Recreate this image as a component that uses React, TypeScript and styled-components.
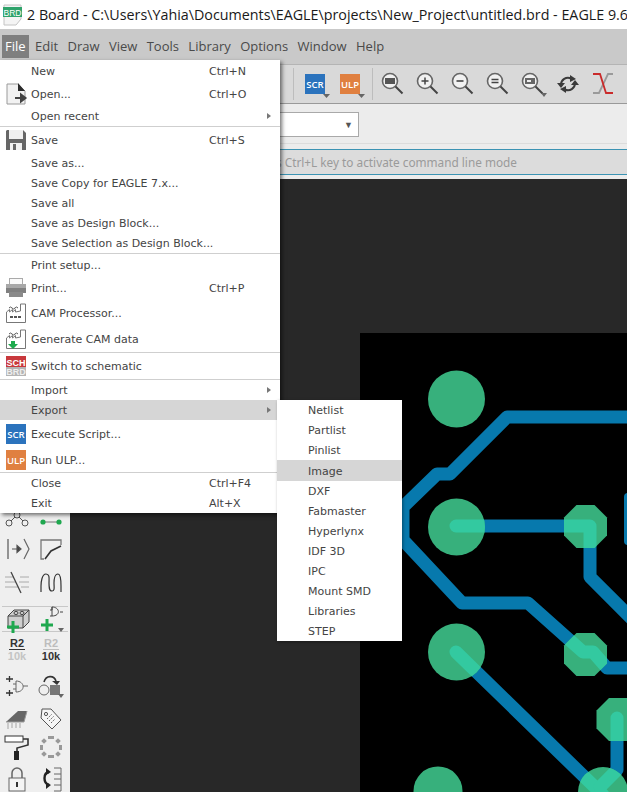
import type { ReactNode } from "react";
import { createGlobalStyle, styled } from "styled-components";

const GlobalStyle = createGlobalStyle`
  html, body { margin: 0; padding: 0; background: #fff; }
  #root { width: 627px; height: 792px; overflow: hidden; }
`;

const UI = `"Open Sans", "Noto Sans", sans-serif`;
const MENU = `"DejaVu Sans", "Noto Sans", sans-serif`;

const Page = styled.div`
  position: relative;
  width: 627px;
  height: 792px;
  overflow: hidden;
  display: flex;
  flex-direction: column;
  font-family: ${UI};
`;

const TitleBar = styled.div`
  height: 29px;
  display: flex;
  align-items: center;
  gap: 5px;
  padding-left: 3px;
  background: #fff;
  color: #1a1a1a;
  font-size: 14.3px;
  white-space: nowrap;
  flex: none;
`;

const TitleIcon = styled.svg`
  flex: none;
  display: block;
`;

const MenuBar = styled.div`
  height: 35px;
  display: flex;
  align-items: center;
  padding-left: 2px;
  gap: 3.4px;
  background: #c9c9c9;
  flex: none;
`;

const MenuBarItem = styled.div<{ $active?: boolean }>`
  height: 23px;
  line-height: 23px;
  padding: 0 3px;
  font-size: 13px;
  color: ${(p) => (p.$active ? "#fff" : "#4a4a4a")};
  background: ${(p) => (p.$active ? "#7f7f7f" : "transparent")};
`;

const Toolbar = styled.div`
  height: 38px;
  display: flex;
  align-items: center;
  padding-left: 293px;
  background: #d9d9d9;
  border-top: 1px solid #b4b4b4;
  border-bottom: 1px solid #999;
  flex: none;
`;

const ToolbarSep = styled.div<{ $gap?: number }>`
  width: 1px;
  height: 32px;
  background: #bdbdbd;
  margin-left: ${(p) => p.$gap ?? 0}px;
  margin-right: 2px;
  flex: none;
`;

const ToolbarItem = styled.div<{ $first?: boolean; $start?: boolean }>`
  width: 35px;
  height: 30px;
  display: flex;
  align-items: center;
  justify-content: ${(p) => (p.$start ? "flex-start" : "center")};
  margin-left: ${(p) => (p.$first ? 9 : 0)}px;
  flex: none;
`;

const OptionBar = styled.div`
  height: 40px;
  display: flex;
  align-items: flex-start;
  padding-top: 8px;
  box-sizing: border-box;
  background: #ececec;
  border-bottom: 1px solid #dcdcdc;
  flex: none;
`;

const LayerSelect = styled.div`
  width: 208px;
  height: 25px;
  margin-left: 151px;
  box-sizing: border-box;
  background: #fff;
  border: 1px solid #a9a9a9;
  display: flex;
  align-items: center;
  justify-content: flex-end;
  padding-right: 5px;
  color: #555;
  font-size: 9px;
`;

const CommandWrap = styled.div`
  height: 35px;
  padding: 5px 0;
  box-sizing: border-box;
  background: #ececec;
  flex: none;
`;

const CommandLine = styled.div`
  height: 26px;
  box-sizing: border-box;
  background: #dcdcdc;
  border-top: 1px solid #3b93b3;
  border-bottom: 1px solid #3b93b3;
  font-family: "Noto Sans", sans-serif;
  font-size: 11.8px;
  line-height: 24px;
  color: #9a9a9a;
  width: 100%;
  white-space: nowrap;
`;

const CommandText = styled.div`
  width: 517px;
  text-align: right;
`;

const Workspace = styled.div`
  flex: 1;
  display: flex;
  min-height: 0;
`;

const ToolColumn = styled.div`
  width: 70px;
  padding-top: 322px;
  box-sizing: border-box;
  background: #efefef;
  flex: none;
`;

const ToolRow = styled.div<{ $h: number }>`
  height: ${(p) => p.$h}px;
  display: grid;
  grid-template-columns: 34px 34px;
  align-items: center;
  justify-items: center;
`;

const ToolSep = styled.div<{ $top: number }>`
  height: 1px;
  background: #c8c8c8;
  margin: ${(p) => p.$top}px 2px 0;
`;

const ToolSvg = styled.svg`
  display: block;
  overflow: visible;
`;

const ValueStack = styled.div`
  width: 26px;
  display: flex;
  flex-direction: column;
  align-items: center;
  font-family: "Liberation Sans", sans-serif;
  font-weight: 700;
  font-size: 11px;
  line-height: 12px;
`;

const ValueName = styled.span<{ $dim?: boolean }>`
  color: ${(p) => (p.$dim ? "#bdbdbd" : "#333")};
  width: 16px;
  text-align: center;
  border-bottom: 1px solid ${(p) => (p.$dim ? "#bdbdbd" : "#333")};
`;

const ValueAmount = styled.span<{ $dim?: boolean }>`
  color: ${(p) => (p.$dim ? "#c4c4c4" : "#333")};
`;

const Canvas = styled.div`
  flex: 1;
  min-width: 0;
  background: #282828;
  padding: 154px 0 0 290px;
  box-sizing: border-box;
`;

const Board = styled.svg`
  display: block;
  width: 267px;
  height: 459px;
  background: #000;
`;

const FileMenu = styled.div`
  position: absolute;
  left: 0;
  top: 60px;
  width: 280px;
  background: #fff;
  box-shadow: 2px 2px 4px rgba(0, 0, 0, 0.55);
  font-family: ${MENU};
  font-size: 11px;
  color: #444;
`;

const Row = styled.div<{ $h: number; $active?: boolean }>`
  height: ${(p) => p.$h}px;
  box-sizing: border-box;
  display: grid;
  grid-template-columns: 31px 178px 58px 13px;
  align-items: center;
  white-space: nowrap;
  background: ${(p) => (p.$active ? "#d6d6d6" : "transparent")};
`;

const RowLabel = styled.span`
  padding-top: 1px;
`;

const RowIcon = styled.div`
  padding-left: 6px;
  display: flex;
  align-items: center;
`;

const Arrow = styled.div`
  width: 0;
  height: 0;
  border-left: 4px solid #777;
  border-top: 3px solid transparent;
  border-bottom: 3px solid transparent;
`;

const MenuSep = styled.div`
  height: 1px;
  background: #cfcfcf;
`;

const SubMenu = styled.div`
  position: absolute;
  left: 277px;
  top: 400px;
  width: 125px;
  background: #fff;
  box-shadow: 1px 1px 3px rgba(0, 0, 0, 0.4);
  font-family: ${MENU};
  font-size: 11px;
  color: #444;
`;

const SubRow = styled.div<{ $active?: boolean }>`
  height: ${(p) => (p.$active ? 21 : 20)}px;
  line-height: ${(p) => (p.$active ? 23 : 22)}px;
  padding-left: 31px;
  background: ${(p) => (p.$active ? "#d6d6d6" : "transparent")};
`;

function BrdDoc() {
  return (
    <TitleIcon width="19" height="22" viewBox="0 0 19 22">
      <path d="M1 1h17v14l-5 6H1z" fill="#f4f4f4" stroke="#c4c4c4" />
      <rect x="0" y="3" width="19" height="10" fill="#2fa36b" />
      <text x="9.5" y="11.5" textAnchor="middle" fontSize="8.5" fontFamily="Liberation Sans" fill="#fff">BRD</text>
    </TitleIcon>
  );
}

function OpenIcon() {
  return (
    <ToolSvg width="22" height="22" viewBox="0 0 22 22">
      <path d="M1 1h11l7 7v13H1z" fill="#f2f2f2" stroke="#9a9a9a" />
      <path d="M12 0l7 8h-7z" fill="#2c2c2c" />
      <path d="M9 15h9M15 11.5l4.5 3.5-4.5 3.500z" stroke="#444" strokeWidth="2" fill="#444" />
    </ToolSvg>
  );
}

function SaveIcon() {
  return (
    <ToolSvg width="20" height="20" viewBox="0 0 20 20">
      <path d="M1 0h16l3 3v17H0V1z" fill="#666" />
      <rect x="3" y="0" width="14" height="9" fill="#f0f0f0" />
      <rect x="4" y="13" width="12" height="7" fill="#f0f0f0" />
      <rect x="7" y="14" width="3" height="6" fill="#666" />
    </ToolSvg>
  );
}

function PrintIcon() {
  return (
    <ToolSvg width="20" height="20" viewBox="0 0 20 20">
      <rect x="3.5" y="0.5" width="13" height="7" fill="#fafafa" stroke="#aaa" />
      <rect x="0" y="6" width="20" height="9" fill="#a8a8a8" />
      <rect x="0" y="10" width="20" height="5" fill="#808080" />
      <rect x="3" y="14" width="14" height="5" fill="#8a8a8a" />
    </ToolSvg>
  );
}

function FactoryIcon({ down }: { down?: boolean }) {
  return (
    <ToolSvg width="20" height="20" viewBox="0 0 20 20">
      <path d="M0.5 19.5V9l3-2.5v2.5l3-2.5v2.5l3-2.5v2.5l5-1V1h5v18.5z" fill="#fff" stroke="#777" />
      <path d="M3 5q1.5-2 3 0t3 0 3 0" fill="none" stroke="#555" />
      {down ? (
        <path d="M5 12h4v3h3l-5 5-5-5h3z" fill="#1faa4e" />
      ) : (
        <path d="M4 14h3M8 14h3M12 14h3" stroke="#555" strokeWidth="2" />
      )}
    </ToolSvg>
  );
}

function SwitchIcon() {
  return (
    <ToolSvg width="20" height="20" viewBox="0 0 20 20">
      <rect width="20" height="11" fill="#c8383c" />
      <rect y="11" width="20" height="9" fill="#b4b4b4" />
      <text x="10" y="9.5" textAnchor="middle" fontSize="9" fontWeight="700" fontFamily="Liberation Sans" fill="#fff">SCH</text>
      <text x="10" y="19" textAnchor="middle" fontSize="9" fontWeight="700" fontFamily="Liberation Sans" fill="#eee">BRD</text>
    </ToolSvg>
  );
}

function ScriptBadge({ label, color, caret }: { label: string; color: string; caret?: boolean }) {
  return (
    <ToolSvg width="20" height="20" viewBox="0 0 20 20">
      <rect width="20" height="20" fill={color} />
      <text x="10" y="14" textAnchor="middle" fontSize="9.5" fontWeight="600" fontFamily="Open Sans" fill="#fff">{label}</text>
      {caret ? <path d="M18 20h7l-3.5 4z" fill="#666" /> : null}
    </ToolSvg>
  );
}

function Magnifier({ kind, caret }: { kind: "fit" | "in" | "out" | "last" | "select"; caret?: boolean }) {
  return (
    <ToolSvg width="30" height="28" viewBox="0 0 30 28">
      <circle cx="12" cy="11" r="7.5" fill="#f1f1f1" stroke="#666" strokeWidth="1.6" />
      <path d="M17.5 16.5l7 7" stroke="#444" strokeWidth="2" />
      {kind === "fit" ? <rect x="7" y="8" width="10" height="6" fill="#555" /> : null}
      {kind === "in" ? <path d="M8.5 11h7M12 7.5v7" stroke="#444" strokeWidth="1.5" /> : null}
      {kind === "out" ? <path d="M8.5 11h7" stroke="#444" strokeWidth="1.6" /> : null}
      {kind === "last" ? <path d="M8.5 9.5h7M8.5 12.5h7" stroke="#444" strokeWidth="1.5" /> : null}
      {kind === "select" ? (
        <>
          <rect x="7" y="8" width="10" height="6" fill="#666" />
          <rect x="9" y="10" width="4" height="2" fill="#eee" />
        </>
      ) : null}
      {caret ? <path d="M23 23h6l-3 4z" fill="#666" /> : null}
    </ToolSvg>
  );
}

function RefreshIcon() {
  return (
    <ToolSvg width="22" height="22" viewBox="0 0 22 22">
      <path d="M4 12a7 7 0 0 1 10-6.500" fill="none" stroke="#3a3a3a" strokeWidth="2" />
      <path d="M0 10h8l-4 5zM13 2l6 4-6 3z" fill="#3a3a3a" />
      <path d="M18 10a7 7 0 0 1-10 6.500" fill="none" stroke="#3a3a3a" strokeWidth="2" />
      <path d="M14 12h8l-4-5zM9 20l-6-4 6-3z" fill="#3a3a3a" />
    </ToolSvg>
  );
}

function RatsnestIcon() {
  return (
    <ToolSvg width="22" height="22" viewBox="0 0 22 22">
      <path d="M21 1h-5L7 20H1" fill="none" stroke="#9a9a9a" strokeWidth="1.8" />
      <path d="M1 1h7l6 19h7" fill="none" stroke="#c92a2a" strokeWidth="1.8" />
    </ToolSvg>
  );
}

const GREEN = "#1fa84f";

function Tool({ children }: { children: ReactNode }) {
  return (
    <ToolSvg width="26" height="26" viewBox="0 0 26 26">
      {children}
    </ToolSvg>
  );
}

const PlusMark = ({ x, y }: { x: number; y: number }) => (
  <path d={`M${x - 6} ${y}h12M${x} ${y - 6}v12`} stroke={GREEN} strokeWidth="3" />
);

const Caret = () => <path d="M20 21h6l-3 4z" fill="#666" />;

function Toolset() {
  return (
    <ToolColumn>
      <ToolRow $h={32}>
        <Tool>
          <circle cx="5" cy="19" r="3" fill="none" stroke="#555" />
          <circle cx="21" cy="19" r="3" fill="none" stroke="#555" />
          <circle cx="13" cy="11" r="3" fill="none" stroke="#555" />
          <path d="M7 17l4-4M19 17l-4-4" stroke="#555" />
        </Tool>
        <Tool>
          <path d="M5 18h16" stroke="#777" strokeWidth="1" />
          <circle cx="5" cy="18" r="2.6" fill={GREEN} />
          <circle cx="21" cy="18" r="2.6" fill={GREEN} />
        </Tool>
      </ToolRow>
      <ToolRow $h={32}>
        <Tool>
          <path d="M4 3v20M8 13h8M13 9.5l4 3.5-4 3.500z" fill="#333" stroke="#555" strokeWidth="1.2" />
          <path d="M20 3l5 10-5 10" fill="none" stroke="#666" strokeWidth="1.2" />
        </Tool>
        <Tool>
          <path d="M6 23H3V4h20v5" fill="none" stroke="#777" strokeWidth="1.3" />
          <path d="M7 23l6-8 10-5" fill="none" stroke="#333" strokeWidth="1.6" />
        </Tool>
      </ToolRow>
      <ToolRow $h={34}>
        <Tool>
          <path d="M1 8h9M16 8h9M1 13h11M15 13h10M1 18h13M17 18h8" stroke="#aaa" />
          <path d="M7 3l10 21" stroke="#444" strokeWidth="1.3" />
        </Tool>
        <Tool>
          <path d="M3 23V17c0-4 1-12 5-12s3 5 3 9 0 8 3 8 2-4 2-8 1-9 4-9 3 8 3 12v6" fill="none" stroke="#333" strokeWidth="1.2" />
        </Tool>
      </ToolRow>
      <ToolSep $top={7} />
      <ToolRow $h={21}>
        <Tool>
          <path d="M4 9l6-6h15v12l-6 6H4z" fill="#cfcfcf" stroke="#444" />
          <path d="M4 9h15v12M19 9l6-6" fill="none" stroke="#444" />
          <ellipse cx="12" cy="6" rx="2" ry="1.6" fill="none" stroke="#444" />
          <ellipse cx="18" cy="6" rx="2" ry="1.6" fill="none" stroke="#444" />
          <PlusMark x={9} y={20} />
        </Tool>
        <Tool>
          <path d="M14 0v3h-2M14 9h-2M14 0c8 0 9 9 0 9zM22 5h3" fill="#efefef" stroke="#444" />
          <PlusMark x={9} y={18} />
          <Caret />
        </Tool>
      </ToolRow>
      <ToolSep $top={3} />
      <ToolRow $h={34}>
        <ValueStack>
          <ValueName>R2</ValueName>
          <ValueAmount $dim>10k</ValueAmount>
        </ValueStack>
        <ValueStack>
          <ValueName $dim>R2</ValueName>
          <ValueAmount>10k</ValueAmount>
        </ValueStack>
      </ToolRow>
      <ToolRow $h={40}>
        <Tool>
          <path d="M2 6h7M5.500 3v6M2 20h7M5.500 17v6" stroke="#333" strokeWidth="1.3" />
          <path d="M12 8c9 0 10 11 0 11zM9 11h3M9 16h3M19 13h5" fill="#efefef" stroke="#666" />
        </Tool>
        <Tool>
          <circle cx="6" cy="17" r="5" fill="#efefef" stroke="#666" />
          <rect x="12" y="12" width="10" height="10" fill="#777" />
          <path d="M6 9c2-7 10-7 12-1" fill="none" stroke="#333" strokeWidth="1.6" />
          <path d="M14 8h8l-3 4z" fill="#333" />
          <Caret />
        </Tool>
      </ToolRow>
      <ToolRow $h={22}>
        <Tool>
          <path d="M2 16l12-11h9l-3 11z" fill="#666" />
          <path d="M2 16h18l3-11" fill="none" stroke="#999" />
          <path d="M4 17v6M8 17v5M12 17v5M16 17v5" stroke="#bbb" strokeWidth="1.4" />
        </Tool>
        <Tool>
          <path d="M4 3h9l10 11-9 9L3 12z" fill="#f6f6f6" stroke="#555" />
          <circle cx="8" cy="8" r="1.6" fill="none" stroke="#555" />
          <path d="M9 13l5-5M11 15l5-5M13 17l4-4" stroke="#666" strokeDasharray="1.5 1" />
        </Tool>
      </ToolRow>
      <ToolRow $h={38}>
        <Tool>
          <rect x="1" y="2" width="18" height="6" fill="#fff" stroke="#333" />
          <path d="M19 5h5v6l-11 3v3" fill="none" stroke="#333" strokeWidth="1.6" />
          <rect x="10" y="17" width="5" height="9" fill="#222" />
        </Tool>
        <Tool>
          <rect x="10" y="2" width="6" height="3" fill="#999" />
          <rect x="10" y="21" width="6" height="3" fill="#999" />
          <rect x="2" y="11" width="3" height="5" fill="#999" />
          <rect x="21" y="11" width="3" height="5" fill="#999" />
          <rect x="4" y="5" width="4" height="4" fill="#999" transform="rotate(45 6 7)" />
          <rect x="18" y="5" width="4" height="4" fill="#999" transform="rotate(45 20 7)" />
          <rect x="4" y="18" width="4" height="4" fill="#999" transform="rotate(45 6 20)" />
          <rect x="18" y="18" width="4" height="4" fill="#999" transform="rotate(45 20 20)" />
        </Tool>
      </ToolRow>
      <ToolRow $h={26}>
        <Tool>
          <path d="M8 12V7a5 5 0 0 1 10 0v5" fill="none" stroke="#666" strokeWidth="1.5" />
          <rect x="5" y="12" width="16" height="13" fill="#f4f4f4" stroke="#666" />
          <rect x="12" y="16" width="2" height="5" fill="#333" />
        </Tool>
        <Tool>
          <path d="M11 6c-6 1-6 11 0 13" fill="none" stroke="#222" strokeWidth="2.4" />
          <path d="M8 2l5 4-5 3zM8 16l5 3-5 4z" fill="#222" />
          <path d="M16 2h7v23h-7M16 8h7M16 13h7M16 19h7" fill="none" stroke="#666" />
        </Tool>
      </ToolRow>
    </ToolColumn>
  );
}

const TRACES = [
  "M640 417H507L450 474H437L403 507V540L462 603H528L583 652H593L607 668H640",
  "M456 526H590V577L640 627",
  "M456 652L603 795",
  "M617 718V770L600 787",
];

const octagon = (cx: number, cy: number, r: number) => {
  const s = r * 0.42;
  return `${cx - s},${cy - r} ${cx + s},${cy - r} ${cx + r},${cy - s} ${cx + r},${cy + s} ${cx + s},${cy + r} ${cx - s},${cy + r} ${cx - r},${cy + s} ${cx - r},${cy - s}`;
};

function Pads() {
  return (
    <>
      <circle cx="456.5" cy="399" r="28.5" />
      <circle cx="456.5" cy="527" r="28.5" />
      <circle cx="456.5" cy="652" r="28.5" />
      <circle cx="438" cy="791" r="24.5" />
      <circle cx="603" cy="792" r="25" />
      <polygon points={octagon(585.5, 526.5, 21.5)} />
      <polygon points={octagon(585.5, 654.5, 21.5)} />
      <polygon points={octagon(618, 719.5, 21.5)} />
    </>
  );
}

function Pcb() {
  const drawTraces = (stroke: string) =>
    TRACES.map((d) => (
      <path key={d} d={d} fill="none" stroke={stroke} strokeWidth="13" strokeLinecap="round" strokeLinejoin="round" />
    ));
  return (
    <Board viewBox="360 333 267 459">
      <defs>
        <clipPath id="pad-clip">
          <Pads />
        </clipPath>
      </defs>
      {drawTraces("#0779ad")}
      <rect x="624" y="493" width="20" height="52" rx="4" fill="#0779ad" />
      <g fill="#37b07c">
        <Pads />
      </g>
      <g clipPath="url(#pad-clip)">{drawTraces("#33c9a0")}</g>
    </Board>
  );
}

type Item = { h: number; label?: string; key?: string; icon?: ReactNode; arrow?: boolean; active?: boolean; sep?: boolean };

const ITEMS: Item[] = [
  { h: 22, label: "New", key: "Ctrl+N" },
  { h: 24, label: "Open...", key: "Ctrl+O", icon: <OpenIcon /> },
  { h: 20, label: "Open recent", arrow: true },
  { h: 1, sep: true },
  { h: 26, label: "Save", key: "Ctrl+S", icon: <SaveIcon /> },
  { h: 20, label: "Save as..." },
  { h: 20, label: "Save Copy for EAGLE 7.x..." },
  { h: 20, label: "Save all" },
  { h: 20, label: "Save as Design Block..." },
  { h: 20, label: "Save Selection as Design Block..." },
  { h: 1, sep: true },
  { h: 21, label: "Print setup..." },
  { h: 25, label: "Print...", key: "Ctrl+P", icon: <PrintIcon /> },
  { h: 26, label: "CAM Processor...", icon: <FactoryIcon /> },
  { h: 26, label: "Generate CAM data", icon: <FactoryIcon down /> },
  { h: 1, sep: true },
  { h: 26, label: "Switch to schematic", icon: <SwitchIcon /> },
  { h: 1, sep: true },
  { h: 20, label: "Import", arrow: true },
  { h: 20, label: "Export", arrow: true, active: true },
  { h: 27, label: "Execute Script...", icon: <ScriptBadge label="SCR" color="#2b73bd" /> },
  { h: 25, label: "Run ULP...", icon: <ScriptBadge label="ULP" color="#e08040" /> },
  { h: 1, sep: true },
  { h: 20, label: "Close", key: "Ctrl+F4" },
  { h: 20, label: "Exit", key: "Alt+X" },
];

const EXPORTS = ["Netlist", "Partlist", "Pinlist", "Image", "DXF", "Fabmaster", "Hyperlynx", "IDF 3D", "IPC", "Mount SMD", "Libraries", "STEP"];

const MENUS = ["File", "Edit", "Draw", "View", "Tools", "Library", "Options", "Window", "Help"];

export default function App() {
  return (
    <Page>
      <GlobalStyle />
      <TitleBar>
        <BrdDoc />
        2 Board - C:\Users\Yahia\Documents\EAGLE\projects\New_Project\untitled.brd - EAGLE 9.6
      </TitleBar>
      <MenuBar>
        {MENUS.map((m) => (
          <MenuBarItem key={m} $active={m === "File"}>
            {m}
          </MenuBarItem>
        ))}
      </MenuBar>
      <Toolbar>
        <ToolbarSep />
        <ToolbarItem $first $start>
          <ScriptBadge label="SCR" color="#2b73bd" caret />
        </ToolbarItem>
        <ToolbarItem $start>
          <ScriptBadge label="ULP" color="#e08040" caret />
        </ToolbarItem>
        <ToolbarSep $gap={-3} />
        <ToolbarItem><Magnifier kind="fit" /></ToolbarItem>
        <ToolbarItem><Magnifier kind="in" /></ToolbarItem>
        <ToolbarItem><Magnifier kind="out" /></ToolbarItem>
        <ToolbarItem><Magnifier kind="last" /></ToolbarItem>
        <ToolbarItem><Magnifier kind="select" caret /></ToolbarItem>
        <ToolbarItem><RefreshIcon /></ToolbarItem>
        <ToolbarItem><RatsnestIcon /></ToolbarItem>
      </Toolbar>
      <OptionBar>
        <LayerSelect>▼</LayerSelect>
      </OptionBar>
      <CommandWrap>
        <CommandLine>
          <CommandText>Press Ctrl+L key to activate command line mode</CommandText>
        </CommandLine>
      </CommandWrap>
      <Workspace>
        <Toolset />
        <Canvas>
          <Pcb />
        </Canvas>
      </Workspace>
      <FileMenu>
        {ITEMS.map((item, i) =>
          item.sep ? (
            <MenuSep key={i} />
          ) : (
            <Row key={i} $h={item.h} $active={item.active}>
              <RowIcon>{item.icon}</RowIcon>
              <RowLabel>{item.label}</RowLabel>
              <RowLabel>{item.key}</RowLabel>
              {item.arrow ? <Arrow /> : <span />}
            </Row>
          )
        )}
      </FileMenu>
      <SubMenu>
        {EXPORTS.map((name) => (
          <SubRow key={name} $active={name === "Image"}>
            {name}
          </SubRow>
        ))}
      </SubMenu>
    </Page>
  );
}
